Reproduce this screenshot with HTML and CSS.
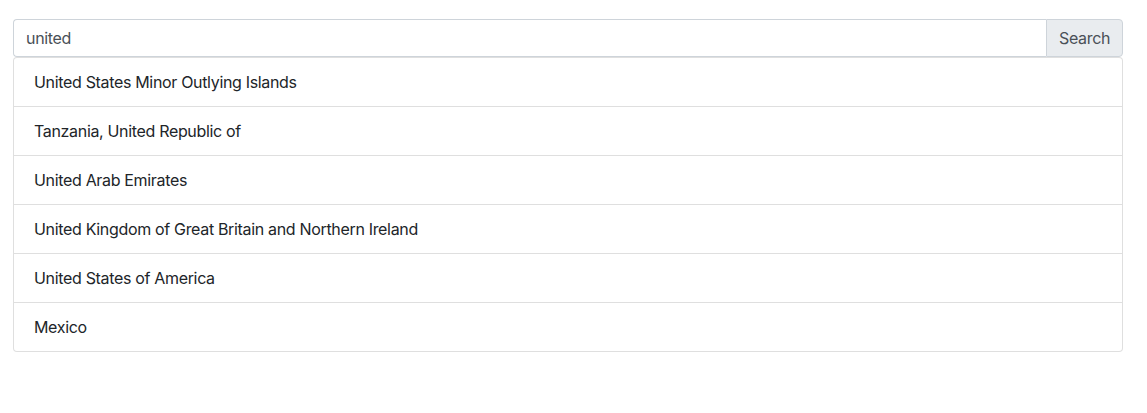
FILE: index.html
```html
<!DOCTYPE html>
<html>
<head>
<meta charset="utf-8">
<link rel="stylesheet" href="styles.css">
</head>
<body>
<div class="wrap">
  <div class="input-group">
    <input class="form-control" type="text" value="united">
    <button class="btn" type="button">Search</button>
  </div>
  <ul class="list-group">
    <li class="list-item">United States Minor Outlying Islands</li>
    <li class="list-item">Tanzania, United Republic of</li>
    <li class="list-item">United Arab Emirates</li>
    <li class="list-item">United Kingdom of Great Britain and Northern Ireland</li>
    <li class="list-item">United States of America</li>
    <li class="list-item">Mexico</li>
  </ul>
</div>
</body>
</html>
```

FILE: styles.css
```css
* { box-sizing: border-box; }
html, body { margin: 0; padding: 0; background: #fff; }
body {
  font-family: Inter, "Liberation Sans", Arial, sans-serif;
  font-size: 16px;
  line-height: 1.5;
  letter-spacing: -0.33px;
  color: #212529;
}
.wrap {
  width: 1110px;
  margin: 19px 0 0 13px;
}
.input-group {
  display: flex;
  height: 38px;
}
.form-control {
  flex: 1;
  min-width: 0;
  height: 38px;
  padding: 6px 12px;
  font: inherit;
  letter-spacing: inherit;
  color: #495057;
  border: 1px solid #ced4da;
  border-right: 0;
  border-radius: 4px 0 0 4px;
  outline: none;
  background: #fff;
}
.btn {
  width: 77px;
  height: 38px;
  padding: 6px 12px;
  font: inherit;
  letter-spacing: inherit;
  color: #495057;
  background: #e9ecef;
  border: 1px solid #ced4da;
  border-radius: 0 4px 4px 0;
}
.list-group {
  list-style: none;
  margin: 0;
  padding: 0;
  display: flex;
  flex-direction: column;
}
.list-item {
  padding: 12px 20px;
  border: 1px solid rgba(0, 0, 0, 0.125);
  margin-bottom: -1px;
  background: #fff;
}
.list-item:first-child { border-radius: 4px 4px 0 0; }
.list-item:last-child { margin-bottom: 0; border-radius: 0 0 4px 4px; }
```
